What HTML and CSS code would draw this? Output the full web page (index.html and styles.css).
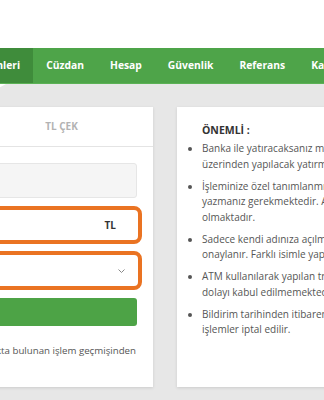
FILE: index.html
```html
<!DOCTYPE html>
<html>
  <head>
    <meta charset="utf-8">
    <title>TL Çek</title>
    <link rel="stylesheet" href="styles.css">
  </head>
  <body>
    <div class="top"></div>

    <div class="nav">
      <a class="nav-item active" href="#">Para İşlemleri</a>
      <a class="nav-item" href="#">Cüzdan</a>
      <a class="nav-item" href="#">Hesap</a>
      <a class="nav-item" href="#">Güvenlik</a>
      <a class="nav-item" href="#">Referans</a>
      <a class="nav-item" href="#">Kampanyalar</a>
    </div>

    <div class="main">
      <div class="card left">
        <div class="tabs">
          <div class="tab">TL YATIR</div>
          <div class="tab">TL ÇEK</div>
        </div>
        <div class="form">
          <div class="field plain"></div>
          <div class="field marked"><span class="unit">TL</span></div>
          <div class="field marked select">
            <svg width="7" height="4" viewBox="0 0 7 4"><polyline points="0.5,0.5 3.5,3.5 6.5,0.5" fill="none" stroke="#888" stroke-width="1"/></svg>
          </div>
          <div class="button"></div>
          <p class="note">Talebinizin durumunu sağdaki kutucukta bulunan işlem geçmişinden<span>takip edebilirsiniz.</span></p>
        </div>
      </div>

      <div class="card info">
        <h4>ÖNEMLİ :</h4>
        <ul>
          <li>Banka ile yatıracaksanız minimum tutar 100 TL'dir.<br>üzerinden yapılacak yatırmalar kabul edilmez.</li>
          <li>İşleminize özel tanımlanmış referans kodunu<br>yazmanız gerekmektedir. Aksi halde işlem iptal<br>olmaktadır.</li>
          <li>Sadece kendi adınıza açılmış hesaplardan yapılan<br>onaylanır. Farklı isimle yapılan transferler iade edilir.</li>
          <li>ATM kullanılarak yapılan transferler, isim bilgisi<br>dolayı kabul edilmemektedir.</li>
          <li>Bildirim tarihinden itibaren 24 saat içinde gelmeyen<br>işlemler iptal edilir.</li>
        </ul>
      </div>
    </div>
  </body>
</html>
```

FILE: styles.css
```css
html {
  font-family: "Open Sans", "DejaVu Sans", sans-serif;
}

body {
  margin: 0;
  width: 324px;
  height: 400px;
  overflow: hidden;
  background-color: #e7e7e7;
  color: #555;
}

.top {
  height: 48px;
  background-color: #fff;
}

.nav {
  display: flex;
  height: 36px;
  margin-left: -64px;
  background-color: #4ea449;
  border-bottom: 1px solid #5bb155;
  box-sizing: border-box;
  white-space: nowrap;
}

.nav-item {
  position: relative;
  padding: 0 13px;
  line-height: 35px;
  font-size: 10.3px;
  font-weight: bold;
  color: #fff;
  text-decoration: none;
}

.nav-item.active {
  background-color: #3f8c3b;
}

.nav-item.active::after {
  content: "";
  position: absolute;
  right: 27px;
  bottom: -6px;
  border-left: 9px solid transparent;
  border-right: 9px solid transparent;
  border-top: 5px solid #fff;
}

.main {
  display: flex;
  gap: 24px;
  margin-left: -213px;
  padding-top: 23px;
}

.card {
  flex-shrink: 0;
  background-color: #fff;
  box-shadow: 0 1px 3px rgba(0, 0, 0, 0.12);
}

.left {
  width: 366px;
  height: 280px;
}

.tabs {
  display: flex;
  height: 39px;
  border-bottom: 1px solid #e4e4e4;
}

.tab {
  flex: 1;
  line-height: 39px;
  text-align: center;
  font-size: 10px;
  font-weight: bold;
  color: #b3b3b3;
}

.form {
  padding: 16px 16px 0 16px;
}

.field {
  display: flex;
  align-items: center;
  justify-content: flex-end;
  box-sizing: border-box;
  border-radius: 3px;
}

.plain {
  height: 35px;
  background-color: #f5f5f5;
  border: 1px solid #e6e6e6;
}

.marked {
  margin: 8px -5px 0 0;
  height: 38px;
  border: 4px solid #ea7322;
  border-radius: 8px;
  padding-right: 22px;
}

.select {
  margin-top: 7px;
  height: 39px;
  padding-right: 13px;
}

.unit {
  font-size: 10px;
  font-weight: bold;
  color: #333;
}

.button {
  margin-top: 8px;
  height: 28px;
  background-color: #4da346;
  border-radius: 3px;
}

.note {
  margin: 17px 1px 0 0;
  font-size: 9.7px;
  line-height: 16px;
  text-align: right;
  white-space: nowrap;
}

.note span {
  display: block;
  text-align: left;
}

.info {
  width: 300px;
  padding: 15px 0 19px 25px;
  white-space: nowrap;
}

.info h4 {
  margin: 0 0 3px 0;
  font-size: 10.5px;
  line-height: 16px;
  color: #333;
}

.info ul {
  margin: 0;
  padding: 0;
  font-size: 10px;
  line-height: 15.5px;
}

.info li {
  margin-bottom: 6.5px;
}

.info li:last-child {
  margin-bottom: 0;
}
```
